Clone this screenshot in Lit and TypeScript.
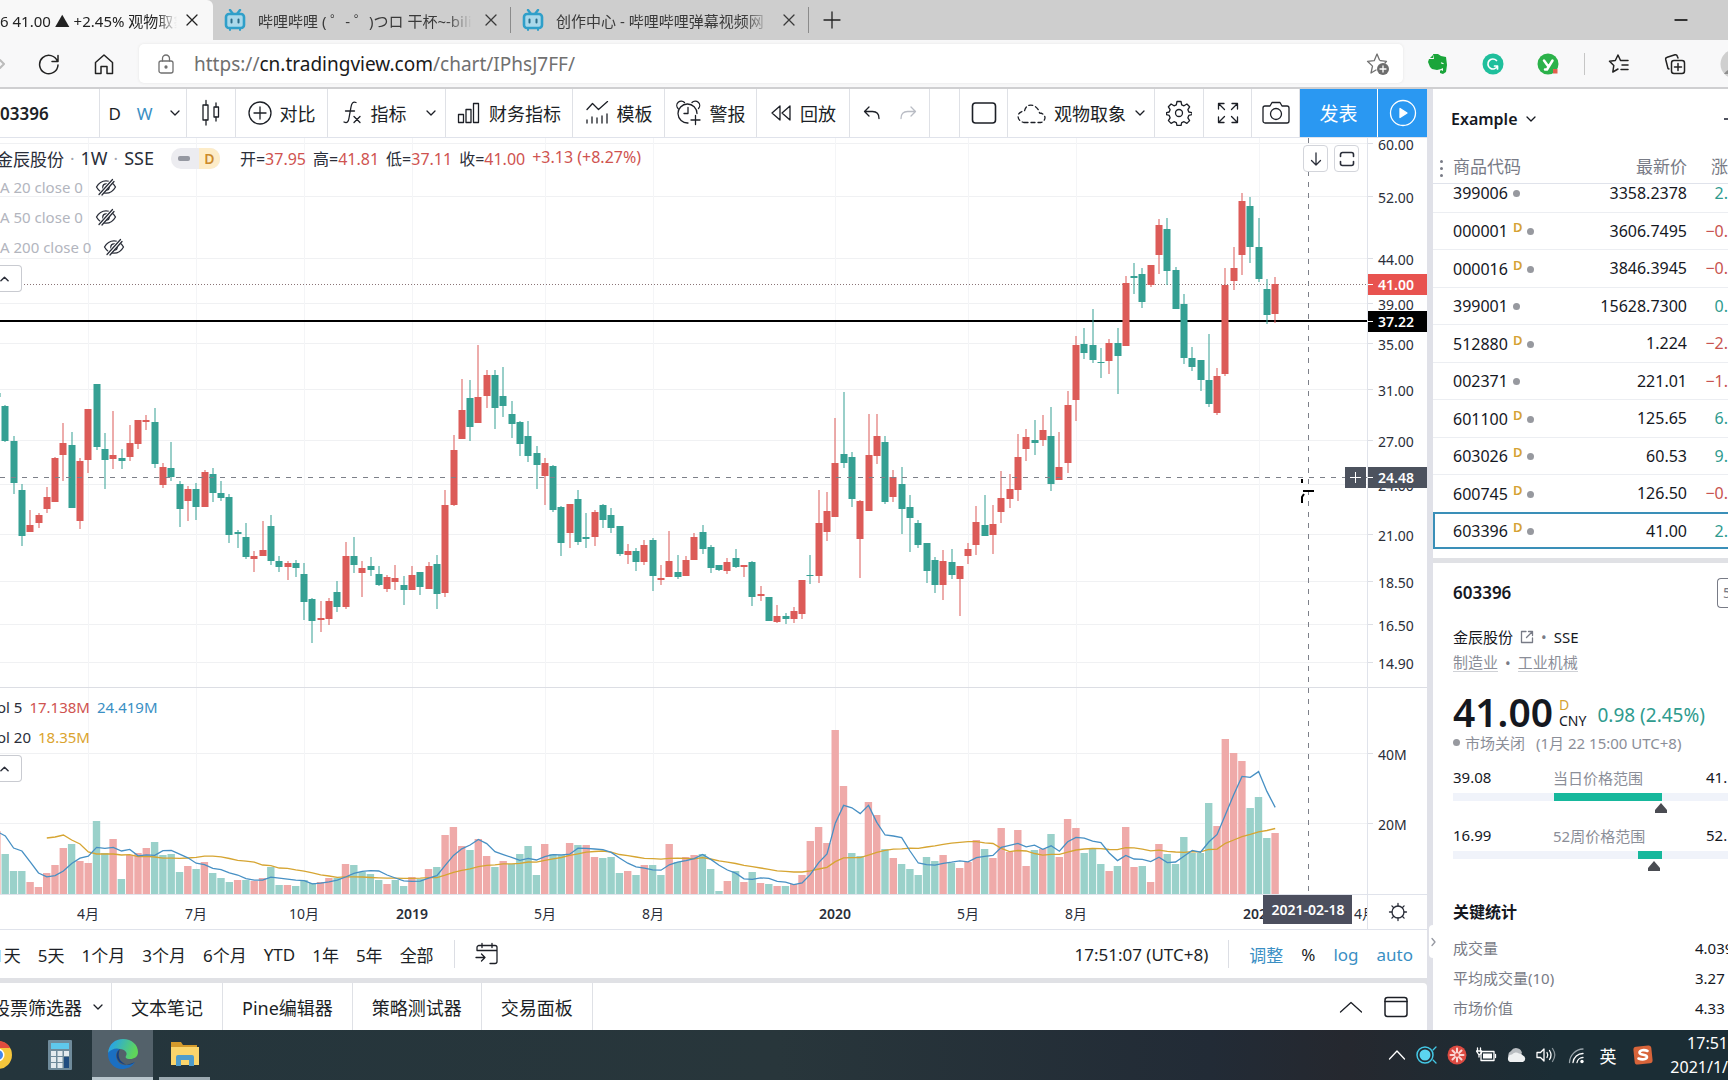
import { LitElement, html, svg, css, nothing } from "lit";
import { customElement, state } from "lit/decorators.js";
import { classMap } from "lit/directives/class-map.js";
import { styleMap } from "lit/directives/style-map.js";

const UP = "#dc5b58";
const DOWN = "#35a093";

/* One weekly candle: direction, high, body top, body bottom, low, volume. */
const CANDLES = `
g 213 213 217 217 63
g 225 226 261 262 40|g 256 261 303 314 23|g 304 310 356 366 23|r 330 345 352 352 12|r 333 335 343 348 7
r 307 317 329 333 21|r 277 278 322 322 29|r 243 263 275 301 46|g 252 265 328 328 50|r 278 281 341 349 33
r 229 229 280 293 31|g 204 204 267 270 73|g 253 269 280 309 41|r 231 275 279 289 55|g 269 278 281 289 15
r 245 263 277 281 39|r 240 240 264 269 41|r 235 240 242 250 46|g 228 242 284 288 52|r 283 287 305 308 39
g 262 288 297 301 40|g 301 304 329 347 22|r 306 309 321 341 28|g 303 309 327 340 25|r 290 292 327 327 32
g 288 294 313 322 21|g 301 313 318 321 16|g 314 317 355 363 12|g 350 352 354 368 14|g 343 357 377 379 14
r 371 376 379 392 13|r 341 370 376 376 16|g 335 346 381 385 27|g 376 381 387 392 9|r 381 383 387 400 9
g 380 383 388 397 8|g 383 394 422 440 14|g 418 419 441 463 11|r 421 438 440 452 12|r 418 421 439 445 16
g 401 412 427 432 16|r 362 376 427 429 30|g 357 376 385 393 29|r 381 388 393 417 22|g 377 386 390 396 20
g 386 394 405 406 14|r 395 397 409 412 10|r 385 398 402 410 14|g 396 405 410 425 8|r 386 395 410 410 17
g 392 392 407 415 15|r 382 386 409 409 25|g 375 384 414 429 27|r 310 325 413 417 59|r 255 270 325 326 67
r 199 230 259 259 48|g 200 218 247 261 44|r 165 217 243 243 55|r 190 195 216 228 38|g 190 195 228 249 27
g 187 216 226 237 33|g 221 234 244 258 30|g 241 242 264 276 40|g 241 256 276 282 48|g 266 273 285 309 19
r 278 283 296 325 50|g 285 286 330 332 40|g 326 327 363 376 39|r 324 324 353 368 51|g 310 319 362 365 49
g 333 357 359 368 49|r 330 332 357 366 37|g 324 325 340 348 36|g 328 335 348 353 37|g 346 346 374 376 21
r 364 371 375 384 23|g 368 371 382 391 19|r 360 365 382 385 29|g 358 360 396 411 29|r 385 398 400 405 19
r 351 381 397 397 50|g 375 392 397 399 32|r 376 380 396 396 37|r 353 357 380 380 39|g 345 352 369 374 40
g 365 367 388 393 25|g 385 385 390 391 3|r 378 382 391 394 13|g 369 378 387 388 23|r 385 385 387 397 12
g 381 382 417 426 22|r 406 414 416 421 11|g 417 417 441 441 10|r 425 436 442 443 8|g 433 436 439 444 8
r 427 431 439 443 10|r 400 400 434 439 19|g 375 395 396 404 53|r 310 343 396 403 67|r 312 331 352 361 51
r 238 283 337 337 164|g 212 274 283 288 108|g 272 277 319 327 41|r 320 321 359 398 38|r 234 275 331 331 92
r 234 256 276 284 79|g 256 262 322 324 45|r 290 297 317 322 36|g 287 304 329 354 30|g 315 327 338 372 25
g 340 343 365 368 19|g 363 363 391 403 37|g 377 380 405 413 33|r 370 381 405 420 39|g 369 382 395 399 31
r 386 386 399 436 26|r 363 369 376 384 32|r 326 342 365 375 54|g 315 345 356 356 45|r 325 344 355 374 36
r 291 318 332 343 66|r 294 309 319 328 42|r 254 277 310 321 64|r 249 257 269 281 28|g 240 260 263 275 44
r 235 250 260 266 45|g 227 256 304 311 60|r 252 287 300 300 37|r 211 225 283 293 75|r 156 165 220 241 66
g 148 164 173 179 41|g 129 165 180 183 45|g 168 182 183 198 30|r 159 163 181 194 23|g 148 163 176 214 28
r 96 103 166 166 67|g 83 96 98 114 27|g 88 94 122 128 28|r 85 85 105 107 12|r 39 45 75 94 50
g 38 49 91 105 40|g 87 90 129 129 30|g 114 124 178 184 57|g 167 178 187 191 41|g 180 180 200 211 41
g 154 200 224 227 91|r 188 196 233 235 68|r 88 105 194 196 155|r 67 88 101 110 141|r 13 21 75 95 133
g 17 26 67 83 86|g 38 67 99 102 97|g 99 109 135 144 56|r 97 104 134 143 61`
  .trim()
  .split(/[|\n]/)
  .map((row) => {
    const [dir, ...n] = row.trim().split(" ");
    const [high, top, bottom, low, vol] = n.map(Number);
    return { up: dir === "r", high, top, bottom, low, vol };
  });

/* Series starts one week before the first fully visible candle. */
const xAt = (i: number) => 5.3 + 8.3 * (i - 1);
const PRICE_TOP = 42;
const VOL_BASE = 756;
const closeOf = (c: { up: boolean; top: number; bottom: number }) => (c.up ? c.top : c.bottom);

const HISTORY = [83, 38, 66];
const VOLUMES = [...HISTORY, ...CANDLES.map((c) => c.vol)];
const average = (i: number, n: number) => {
  const end = i + HISTORY.length + 1;
  const part = VOLUMES.slice(Math.max(0, end - n), end);
  return part.reduce((a, b) => a + b, 0) / part.length;
};
const LONG_START = [56, 57, 59, 54, 50, 42, 40, 40, 40, 39];
const linePoints = (values: [number, number][]) =>
  values.map(([i, v]) => `${xAt(i).toFixed(1)},${(VOL_BASE - v).toFixed(1)}`).join(" ");
const MA5 = linePoints(CANDLES.map((_, i) => [i, average(i, 5)] as [number, number]));
const MA20 = linePoints(
  CANDLES.map((_, i) => [i, i < 16 ? LONG_START[i - 6] : average(i, 20)] as [number, number]).slice(6)
);

const PRICES: [string, number][] = [
  ["60.00", 5], ["52.00", 58], ["44.00", 120], ["39.00", 165], ["35.00", 205], ["31.00", 251],
  ["27.00", 302], ["24.00", 346], ["21.00", 396], ["18.50", 443], ["16.50", 486], ["14.90", 524],
  ["40M", 615], ["20M", 685],
];
const TIMES: [string, number, boolean][] = [
  ["4月", 88, false], ["7月", 196, false], ["10月", 304, false], ["2019", 412, true], ["5月", 545, false],
  ["8月", 653, false], ["2020", 835, true], ["5月", 968, false], ["8月", 1076, false], ["2021", 1259, true],
];

const QUOTES: [string, boolean, string, string][] = [
  ["399006", false, "3358.2378", "2."],
  ["000001", true, "3606.7495", "−0."],
  ["000016", true, "3846.3945", "−0."],
  ["399001", false, "15628.7300", "0."],
  ["512880", true, "1.224", "−2."],
  ["002371", false, "221.01", "−1."],
  ["601100", true, "125.65", "6."],
  ["603026", true, "60.53", "9."],
  ["600745", true, "126.50", "−0."],
  ["603396", true, "41.00", "2."],
];

const icon = (w: number, h: number, body: unknown, cls = "") => html`<svg
  class="icon ${cls}" width=${w} height=${h} viewBox="0 0 ${w} ${h}" aria-hidden="true"
  fill="none" stroke="currentColor" stroke-width="1.3" stroke-linecap="round" stroke-linejoin="round">${body}</svg>`;

const chevron = (cls = "") => icon(12, 12, svg`<path d="M2 4l4 4 4-4"/>`, cls);
const caretUp = () => icon(10, 10, svg`<path d="M1 7l4-4 4 4" stroke-width="1.6"/>`);
const cross = () => icon(12, 12, svg`<path d="M1 1l10 10M11 1L1 11"/>`);

const biliIcon = () => icon(22, 22, svg`
  <path d="M6 1l3 4M16 1l-3 4" stroke="#2f9fc9" stroke-width="2.4"/>
  <rect x="2" y="5" width="18" height="14" rx="3" fill="#a9d8ea" stroke="#2f9fc9" stroke-width="2.6"/>
  <path d="M7.500 10.500v3M14.500 10.500v3" stroke="#2b6c88" stroke-width="2"/>
  <path d="M6 20v1M16 20v1" stroke="#2f9fc9" stroke-width="2"/>`);

const hiddenEye = () => icon(22, 18, svg`
  <path d="M1.500 9C4 4.500 7.200 2.800 11 2.800S18 4.500 20.500 9c-2.500 4.500-5.700 6.200-9.500 6.200S4 13.500 1.500 9z"/>
  <circle cx="11" cy="9" r="3.200"/>
  <path d="M4 17.500L18.500 1" stroke="#fff" stroke-width="4"/>
  <path d="M4 16.500L17.500 1.500M7 17L19 3.500" />`);

@customElement("browser-chrome")
export class BrowserChrome extends LitElement {
  static styles = css`
    :host { display: block; color: #222; font-family: "Noto Sans", "Noto Sans CJK SC", sans-serif; }
    * { box-sizing: border-box; }
    button { border: 0; background: none; padding: 0; margin: 0; color: inherit; font: inherit; display: flex; align-items: center; justify-content: center; flex: none; }
    .icon { display: block; flex: none; }
    .tabs { display: flex; align-items: center; height: 40px; background: #cecece; overflow: hidden; }
    .tab { display: flex; align-items: center; height: 40px; flex: none; font-size: 15px; color: #3a3a3a; }
    .tab.active { background: #f8f8f8; width: 213px; border-radius: 0 6px 0 0; color: #222; }
    .tab .label { overflow: hidden; white-space: nowrap; -webkit-mask-image: linear-gradient(90deg, #000 88%, transparent); }
    .tab.active .label { width: 177px; margin-right: 9px; }
    .tab.second, .tab.third { height: 26px; width: 298px; padding-left: 11px; border-right: 1px solid #8b8b8b; }
    .tab.second .label, .tab.third .label { width: 214px; margin: 0 13px 0 12px; }
    .add { width: 46px; height: 40px; }
    .grow { flex: 1; }
    .min { width: 46px; height: 34px; margin-right: 24px; }
    .bar { display: flex; align-items: center; height: 49px; background: #f8f8f9; border-bottom: 2px solid #cfcfd1; overflow: hidden; }
    .nav { width: 55px; height: 40px; }
    .nav.fwd { width: 21px; color: #bbb; justify-content: flex-start; }
    .address { flex: 1; min-width: 0; display: flex; align-items: center; height: 39px; margin-left: 8px; padding: 0 13px 0 18px; background: #fff; border-radius: 5px; box-shadow: 0 0 3px #e4e4e4; color: #707070; }
    .url { flex: 1; min-width: 0; font-size: 19px; margin-left: 19px; outline: none; white-space: nowrap; overflow: hidden; }
    .url b { font-weight: 400; color: #1a1a1a; }
    .ext { display: flex; align-items: center; gap: 33px; padding: 0 25px 0 24px; }
    .rule { width: 1px; height: 22px; background: #c6c6c6; }
    .right { display: flex; align-items: center; gap: 34px; padding-left: 23px; width: 143px; overflow: hidden; }
  `;

  render() {
    return html`
      <div class="tabs">
        <div class="tab active">
          <span class="label">6 41.00 ▲ +2.45% 观物取象</span>
          <button aria-label="关闭">${cross()}</button>
        </div>
        <div class="tab second">
          ${biliIcon()}<span class="label">哔哩哔哩 ( ゜- ゜)つロ 干杯~-bilibili</span>
          <button aria-label="关闭">${cross()}</button>
        </div>
        <div class="tab third">
          ${biliIcon()}<span class="label">创作中心 - 哔哩哔哩弹幕视频网</span>
          <button aria-label="关闭">${cross()}</button>
        </div>
        <button class="add" aria-label="新建标签页">${icon(18, 18, svg`<path d="M9 1v16M1 9h16"/>`)}</button>
        <div class="grow"></div>
        <button class="min" aria-label="最小化">${icon(14, 4, svg`<path d="M1 2h12" stroke="#000"/>`)}</button>
      </div>
      <div class="bar">
        <button class="nav fwd" aria-label="前进">${icon(6, 14, svg`<path d="M0 3l4 4-4 4" stroke-width="2"/>`)}</button>
        <button class="nav" aria-label="刷新">${icon(22, 22, svg`<path d="M19.500 8.500A9.200 9.200 0 1 0 20 12M20 2.500v6h-6" stroke-width="1.500"/>`)}</button>
        <button class="nav" aria-label="主页">${icon(22, 22, svg`<path d="M2.500 9.500L11 2l8.500 7.500V20.500h-5.500v-7H8v7H2.500z" stroke-width="1.500"/>`)}</button>
        <div class="address">
          ${icon(18, 20, svg`<rect x="2" y="7" width="14" height="12" rx="2"/><path d="M5.500 7V4.500a3.500 3.500 0 0 1 7 0V7"/><circle cx="9" cy="13" r="1" fill="currentColor"/>`)}
          <div class="url" role="textbox" contenteditable="true" aria-label="地址" spellcheck="false">https://<b>cn.tradingview.com</b>/chart/IPhsJ7FF/</div>
          <button aria-label="收藏">${icon(24, 24, svg`<path d="M13.500 8L11 2 8.200 8.700 1.500 9.300l5 4.800L5 21l5-3M14.500 8.700l6 .6-1.500 1.700"/><circle cx="17" cy="17" r="6" fill="#6d6d6d" stroke="none"/><path d="M17 14v6M14 17h6" stroke="#fff"/>`)}</button>
        </div>
        <div class="ext">
          <button aria-label="Evernote">${icon(22, 22, svg`<path d="M6 1h5l3 2 5 1 1 8-1 7-3 2-3-1v-2l1-1 2 1V15l-2 1-4 1-5-1-2-2-2-5 1-3h5z" fill="#1aa53a" stroke="none"/><path d="M3 5l3-3v3z" fill="#1aa53a" stroke="none"/><path d="M14.500 10l1.500.5" stroke="#fff"/>`)}</button>
          <button aria-label="Grammarly">${icon(22, 22, svg`<circle cx="11" cy="11" r="10.500" fill="#1fbf9c" stroke="none"/><path d="M14.500 7.500A5 5 0 1 0 15.500 13H12.500M15.500 13v3" stroke="#fff" stroke-width="1.700"/>`)}</button>
          <button aria-label="有道">${icon(22, 22, svg`<circle cx="11" cy="11" r="10.500" fill="#2bb24a" stroke="none"/><path d="M7 7.500l4 5.500M15.500 7.500L10 16.500H8" stroke="#fff" stroke-width="2.500"/><rect x="16" y="16" width="4.500" height="4.500" fill="#e2604f" stroke="none"/>`)}</button>
        </div>
        <div class="rule"></div>
        <div class="right">
          <button aria-label="收藏夹">${icon(22, 22, svg`<path d="M12.500 7.500L10 2 7.300 7.500 1.500 8.300l4.300 4.200-1 6.500 5.200-3M12.500 7.500H20M14 12h6M13 16.500h7" stroke-width="1.500"/>`)}</button>
          <button aria-label="集锦">${icon(22, 22, svg`<rect x="7.500" y="7.500" width="13" height="13" rx="2.500" stroke-width="1.500"/><path d="M14 10.500v7M10.500 14h7M5 16l-1-.5-2.300-9a2 2 0 0 1 1.500-2.300L11 1.700a2 2 0 0 1 2.300 1.500L14 5" stroke-width="1.500"/>`)}</button>
          <button aria-label="用户">${icon(30, 30, svg`<circle cx="15" cy="15" r="14.500" fill="#cfcfcf" stroke="none"/><circle cx="15" cy="11" r="6" fill="#8d8d8d" stroke="none"/><path d="M4 25a12 9 0 0 1 22 0" fill="#8d8d8d" stroke="none"/>`)}</button>
        </div>
      </div>`;
  }
}

@customElement("chart-toolbar")
export class ChartToolbar extends LitElement {
  static styles = css`
    :host { display: flex; height: 48px; border-bottom: 1px solid #e0e3eb; background: #fff; color: #1c1f26; font-family: "Noto Sans", "Noto Sans CJK SC", sans-serif; font-size: 18px; overflow: hidden; }
    * { box-sizing: border-box; }
    button { border: 0; margin: 0; padding: 0; background: none; color: inherit; font: inherit; display: flex; align-items: center; justify-content: center; white-space: nowrap; }
    .icon { display: block; flex: none; }
    .cell { display: flex; align-items: center; justify-content: center; height: 48px; flex: none; gap: 8px; border-right: 1px solid #dfe1e6; }
    .symbol { width: 100px; font-size: 17px; font-weight: 600; justify-content: flex-start; }
    .period { width: 87px; gap: 16px; padding-left: 3px; font-size: 17px; }
    .period .on { color: #3a8fc4; }
    .w48 { width: 48px; }
    .w49 { width: 49px; }
    .w92 { width: 92px; }
    .w93 { width: 93px; }
    .w118 { width: 118px; padding-left: 4px; }
    .w127 { width: 127px; }
    .w80 { width: 80px; gap: 18px; }
    .w147 { width: 147px; }
    .space { flex: 1; min-width: 0; border-right: 1px solid #dfe1e6; }
    .dim { color: #b9bcc4; }
    .narrow { width: 2px; }
    .publish { width: 78px; background: #2a98f2; color: #fff; border-right: 1px solid #fff; font-size: 19px; }
    .play { width: 49px; background: #2a98f2; color: #fff; border: 0; }
  `;

  render() {
    return html`
      <button class="cell symbol">03396</button>
      <div class="cell period">
        <button>D</button><button class="on">W</button><button aria-label="周期">${chevron()}</button>
      </div>
      <button class="cell w49" aria-label="K线图">${icon(20, 28, svg`<path d="M5 1.500V6M5 21v5M15 4v4M15 18v4"/><rect x="2" y="6" width="5" height="15"/><rect x="13" y="8" width="4.500" height="10"/>`)}</button>
      <button class="cell w92">${icon(24, 24, svg`<circle cx="12" cy="12" r="11"/><path d="M12 6v12M6 12h12"/>`)}对比</button>
      <button class="cell w118">${icon(22, 26, svg`<path d="M3 22c3 1.500 4.500 0 5-4L10 7c.600-4 2-5.500 5-4.500M4.500 11h9M13 16.500l6 6M19 16.500l-6 6"/>`)}指标<span class="narrow"></span>${chevron()}</button>
      <button class="cell w127">${icon(24, 22, svg`<path d="M1.500 20.500v-8h5v8zM9 20.500V7.500h5v13zM16.500 20.500v-19h5v19z"/>`)}财务指标</button>
      <button class="cell w92">${icon(24, 24, svg`<path d="M2 8.500l5.500-6 6 6 9-8M2 22v-3M7 22v-6M12 22v-5M17 22v-7M22 22v-9"/>`)}模板</button>
      <button class="cell w92">${icon(26, 26, svg`<path d="M21 13.500a9.500 9.500 0 1 0-9 9.500M12 7.500v6H8M2 8.500A4.300 4.300 0 0 1 8.500 2.500M16 2.500a4.300 4.300 0 0 1 6.500 6M19.500 15.500v9M15 20h9"/>`)}警报</button>
      <button class="cell w93">${icon(22, 20, svg`<path d="M10 3v14L2 10zM20 3v14l-8-7z"/>`)}回放</button>
      <div class="cell w80">
        <button aria-label="撤销">${icon(18, 18, svg`<path d="M6 3L1.500 7.500 6 12M1.500 7.500h8c4 0 6.500 2.500 6.500 7"/>`)}</button>
        <button class="dim" aria-label="重做">${icon(18, 18, svg`<path d="M12 3l4.500 4.500L12 12M16.500 7.500h-8c-4 0-6.500 2.500-6.500 7"/>`)}</button>
      </div>
      <div class="space"></div>
      <button class="cell w48" aria-label="布局">${icon(26, 24, svg`<rect x="1.500" y="2" width="23" height="20" rx="3" stroke-width="1.600"/>`)}</button>
      <button class="cell w147">${icon(30, 24, svg`<path d="M8 21.500h17c6-2 5-9-1.500-9.500C22 3.500 10.500.5 8.500 10 0 10.500 0 20 8 21.500z" stroke-dasharray="4 3"/>`)}观物取象${chevron()}</button>
      <button class="cell w49" aria-label="设置">${icon(26, 26, svg`<circle cx="13" cy="13" r="3.500"/><path d="M11 1.500h4l.7 3.300 2.300 1 2.900-1.800 2.700 2.800-1.700 2.900.9 2.300 3.200.7v2l-3.200.7-.9 2.400 1.700 2.800-2.700 2.800-2.900-1.700-2.300.9-.7 2.900h-4l-.7-2.900-2.300-.9-2.900 1.700-2.700-2.800 1.700-2.800-.9-2.400-2.700-.7v-2l2.700-.7.9-2.300-1.700-2.900 2.700-2.800L8 5.800l2.300-1z"/>`)}</button>
      <button class="cell w48" aria-label="全屏">${icon(24, 24, svg`<path d="M2.500 8V2.500H8M2.500 2.500l6 6M16 2.500h5.500V8M21.500 2.500l-6 6M2.500 16v5.500H8M2.500 21.500l6-6M16 21.500h5.500V16M21.500 21.500l-6-6"/>`)}</button>
      <button class="cell w48" aria-label="截图">${icon(28, 24, svg`<path d="M3 5h5l2-3.500h8L20 5h5a2 2 0 0 1 2 2v13a2 2 0 0 1-2 2H3a2 2 0 0 1-2-2V7a2 2 0 0 1 2-2z"/><circle cx="14" cy="13" r="5.500"/>`)}</button>
      <button class="cell publish">发表</button>
      <button class="cell play" aria-label="播放">${icon(28, 28, svg`<circle cx="14" cy="14" r="12.500"/><path d="M11 9.500v9l7-4.500z" fill="currentColor"/>`)}</button>`;
  }
}

@customElement("price-chart")
export class PriceChart extends LitElement {
  static styles = css`
    :host { display: grid; grid-template-columns: minmax(0, 1fr) 60px; grid-template-rows: auto 35px; position: relative; overflow: hidden; background: #fff; color: #2a2e39; font-family: "Noto Sans", "Noto Sans CJK SC", sans-serif; }
    * { box-sizing: border-box; }
    button { margin: 0; padding: 0; font: inherit; color: inherit; display: flex; align-items: center; justify-content: center; }
    .plot, .prices, .times { display: block; width: 100%; overflow: hidden; }
    .plot, .prices { height: 756px; }
    .prices { border-left: 1px solid #e0e3eb; }
    .times { height: 35px; border-top: 1px solid #e0e3eb; }
    .corner { border: 0; border-left: 1px solid #e0e3eb; border-top: 1px solid #e0e3eb; background: #fff; }
    text { font-size: 14px; fill: #2a2e39; }
    .bold { font-weight: 600; }
    .light { fill: #fff; font-weight: 600; }
    .mid { text-anchor: middle; }
    .legend { position: absolute; left: 0; top: 6px; display: flex; flex-direction: column; align-items: flex-start; }
    .legend.volume { top: 554px; }
    .row { display: flex; align-items: center; height: 30px; font-size: 15px; white-space: nowrap; }
    .title { font-size: 17px; height: 28px; margin-left: -4px; }
    .title i { font-style: normal; color: #a3a6af; margin: 0 6px; }
    .title .latin { font-size: 18px; }
    .pill { display: flex; align-items: center; height: 21px; margin: 0 20px 0 17px; border-radius: 10px; overflow: hidden; background: #ececf0; }
    .pill .dash { width: 12px; height: 5px; border-radius: 2px; background: #9598a1; margin: 0 9px 0 7px; }
    .pill .d { width: 21px; text-align: center; background: #fdecc8; color: #cc8a2c; font-size: 14px; font-weight: 600; line-height: 21px; }
    .values { display: flex; gap: 7px; font-size: 16px; }
    .values b { font-weight: 400; color: #cf5350; }
    .study { color: #b2b5be; gap: 12px; }
    .study .icon { color: #2a2e39; }
    .vol { gap: 7px; margin-left: -3px; }
    .red { color: #cf5350; }
    .blue { color: #3a8fc4; }
    .gold { color: #dba42e; }
    .fold { width: 22px; height: 27px; margin-top: 3px; padding-right: 12px; background: #fff; border: 1px solid #c9cbd1; border-left: 0; border-radius: 0 4px 4px 0; }
    .tools { position: absolute; top: 7px; right: 68px; display: flex; gap: 6px; }
    .tools button { width: 25px; height: 27px; background: #fff; border: 1px solid #d3d5db; border-radius: 4px; }
  `;

  private plot() {
    return html`<svg class="plot" role="img" aria-label="金辰股份 1W">
      ${PRICES.map(([, y]) => svg`<line x1="0" x2="100%" y1=${y + 0.5} y2=${y + 0.5} stroke="#f0f1f3"/>`)}
      ${TIMES.map(([, x]) => svg`<line x1=${x + 0.5} x2=${x + 0.5} y1="0" y2="756" stroke="#f4f5f7"/>`)}
      <line x1="0" x2="100%" y1="549.5" y2="549.5" stroke="#dcdee4"/>
      <line x1="0" x2="100%" y1="146.5" y2="146.5" stroke="#8a7477" stroke-dasharray="1 2"/>
      <line x1="0" x2="100%" y1="183" y2="183" stroke="#000" stroke-width="2"/>
      <g>
        ${CANDLES.map((c, i) => {
          const x = Math.round(xAt(i));
          const color = c.up ? UP : DOWN;
          return svg`<rect x=${x - 0.5} y=${c.high + PRICE_TOP} width="1" height=${c.low - c.high} fill=${color}/>
            <rect x=${x - 3.5} y=${c.top + PRICE_TOP} width="7" height=${Math.max(1, c.bottom - c.top)} fill=${color}/>`;
        })}
      </g>
      <g>
        ${CANDLES.map((c, i) => {
          const prev = i ? closeOf(CANDLES[i - 1]) : 999;
          const fill = closeOf(c) <= prev ? "#efaaa9" : "#9ad1ca";
          return svg`<rect x=${(xAt(i) - 3.8).toFixed(1)} y=${VOL_BASE - c.vol} width="7.4" height=${c.vol} fill=${fill}/>`;
        })}
        <polyline points=${MA20} fill="none" stroke="#d6a532" stroke-width="1.3"/>
        <polyline points=${MA5} fill="none" stroke="#4790c4" stroke-width="1.3"/>
      </g>
      <line x1="0" x2="100%" y1="339.5" y2="339.5" stroke="#7d8089" stroke-dasharray="5 6"/>
      <line x1="1308.5" x2="1308.5" y1="0" y2="756" stroke="#7d8089" stroke-dasharray="5 6"/>
      <path d="M1302 341v4M1302 365v-6l2-3M1303 353h11" fill="none" stroke="#000" stroke-width="2"/>
      <svg x="100%" y="329" width="22" height="21" overflow="visible">
        <rect x="-22" width="21" height="21" fill="#4c525e"/><path d="M-17 10.500h11M-11.500 5v11" stroke="#fff"/>
      </svg>
    </svg>`;
  }

  private tag(y: number, text: string, fill: string) {
    return svg`<rect x="-1" y=${y} width="61" height="21" fill=${fill}/>
      <path d="M0 ${y + 10.5}h5" stroke="#fff"/><text class="light" x="10" y=${y + 16}>${text}</text>`;
  }

  render() {
    return html`
      ${this.plot()}
      <svg class="prices">
        ${PRICES.map(([label, y]) => svg`<path d="M0 ${y + 0.5}h5" stroke="#dcdee4"/><text x="10" y=${y + 7}>${label}</text>`)}
        <line x1="0" x2="100%" y1="549.5" y2="549.5" stroke="#dcdee4"/>
        ${this.tag(136, "41.00", "#e8534f")} ${this.tag(173, "37.22", "#000")} ${this.tag(329, "24.48", "#4c525e")}
      </svg>
      <svg class="times">
        ${TIMES.map(([label, x, bold]) => svg`<text class=${bold ? "mid bold" : "mid"} x=${x} y="24">${label}</text>`)}
        <text x="1354" y="24">4月</text>
        <rect x="1263" y="0" width="89" height="29" fill="#4c4f5e"/>
        <text class="light mid" x="1308" y="20">2021-02-18</text>
      </svg>
      <button class="corner" aria-label="坐标设置">${icon(20, 20, svg`<circle cx="10" cy="10" r="6"/><path d="M10 4V1.500M10 16v2.500M4 10H1.500M16 10h2.500M5.700 5.700L3.900 3.900M14.300 5.700l1.800-1.800M5.700 14.300l-1.800 1.800M14.300 14.300l1.800 1.800"/>`)}</button>
      <div class="legend">
        <div class="row title">金辰股份<i>·</i><span class="latin">1W</span><i>·</i><span class="latin">SSE</span>
          <span class="pill"><span class="dash"></span><span class="d">D</span></span>
          <span class="values"><span>开=<b>37.95</b></span><span>高=<b>41.81</b></span><span>低=<b>37.11</b></span><span>收=<b>41.00</b></span><b>+3.13 (+8.27%)</b></span>
        </div>
        <div class="row study">A 20 close 0 ${hiddenEye()}</div>
        <div class="row study">A 50 close 0 ${hiddenEye()}</div>
        <div class="row study">A 200 close 0 ${hiddenEye()}</div>
        <button class="fold" aria-label="收起">${caretUp()}</button>
      </div>
      <div class="legend volume">
        <div class="row vol"><span>ol 5</span><span class="red">17.138M</span><span class="blue">24.419M</span></div>
        <div class="row vol"><span>ol 20</span><span class="gold">18.35M</span></div>
        <button class="fold" aria-label="收起">${caretUp()}</button>
      </div>
      <div class="tools">
        <button aria-label="下移">${icon(14, 16, svg`<path d="M7 2v12M2.500 9.500L7 14l4.500-4.500"/>`)}</button>
        <button aria-label="最大化">${icon(18, 18, svg`<path d="M2.500 6.500v-2a2 2 0 0 1 2-2h2M11.500 2.500h2a2 2 0 0 1 2 2v2M15.500 11.500v2a2 2 0 0 1-2 2h-2M6.500 15.500h-2a2 2 0 0 1-2-2v-2M6.500 2.500h5M6.500 15.500h5" stroke-width="1.600"/>`)}</button>
      </div>`;
  }
}

@customElement("chart-footer")
export class ChartFooter extends LitElement {
  @state() private ranges = ["1天", "5天", "1个月", "3个月", "6个月", "YTD", "1年", "5年", "全部"];

  static styles = css`
    :host { display: block; background: #e0e1e5; color: #1c1f26; font-family: "Noto Sans", "Noto Sans CJK SC", sans-serif; font-size: 17px; }
    * { box-sizing: border-box; }
    button { border: 0; margin: 0; padding: 0; background: none; color: inherit; font: inherit; display: flex; align-items: center; justify-content: center; white-space: nowrap; flex: none; }
    .icon { display: block; flex: none; }
    .ranges { display: flex; align-items: center; height: 49px; margin-bottom: 5px; border-top: 1px solid #e0e3eb; background: #fff; overflow: hidden; padding-right: 14px; }
    .list { display: flex; gap: 17px; margin-left: -6px; }
    .rule { width: 1px; height: 28px; background: #dcdee4; margin: 0 20px; flex: none; }
    .grow { flex: 1; }
    .scale { display: flex; gap: 18px; }
    .on { color: #3a8fc4; }
    .tabs { display: flex; height: 47px; background: #fff; border-radius: 0 4px 0 0; overflow: hidden; padding-right: 18px; }
    .tab { padding: 0 19px; border-right: 1px solid #dfe1e6; font-size: 18px; height: 47px; }
    .tab.first { padding: 0 7px 0 0; width: 112px; justify-content: flex-end; gap: 10px; }
    .tail { display: flex; align-items: center; gap: 20px; }
  `;

  render() {
    return html`
      <div class="ranges">
        <div class="list">${this.ranges.map((r) => html`<button>${r}</button>`)}</div>
        <div class="rule"></div>
        <button aria-label="前往">${icon(24, 24, svg`<path d="M2 8V5.500A2 2 0 0 1 4 3.500h16a2 2 0 0 1 2 2v14a2 2 0 0 1-2 2h-5M2 8.500h20M7 1.500v4M17 1.500v4M1 15.500h9M6.500 12l3.500 3.500L6.500 19"/>`)}</button>
        <div class="grow"></div>
        <button>17:51:07 (UTC+8)</button>
        <div class="rule"></div>
        <div class="scale"><button class="on">调整</button><button>%</button><button class="on">log</button><button class="on">auto</button></div>
      </div>
      <div class="tabs">
        <button class="tab first">股票筛选器${chevron()}</button>
        <button class="tab">文本笔记</button>
        <button class="tab">Pine编辑器</button>
        <button class="tab">策略测试器</button>
        <button class="tab">交易面板</button>
        <div class="grow"></div>
        <div class="tail">
          <button aria-label="展开">${icon(24, 14, svg`<path d="M1.500 12L12 2.500 22.500 12"/>`)}</button>
          <button aria-label="窗口">${icon(26, 22, svg`<rect x="2" y="1.500" width="22" height="19" rx="2.500" stroke-width="1.500"/><path d="M2 5.500h22" stroke-width="1.500"/>`)}</button>
        </div>
      </div>`;
  }
}

@customElement("watch-panel")
export class WatchPanel extends LitElement {
  @state() private selected = "603396";

  static styles = css`
    :host { display: flex; flex-direction: column; min-width: 0; overflow: hidden; background: #fff; color: #15181f; font-family: "Noto Sans", "Noto Sans CJK SC", sans-serif; font-size: 16px; white-space: nowrap; }
    * { box-sizing: border-box; }
    button { border: 0; margin: 0; padding: 0; background: none; color: inherit; font: inherit; display: flex; align-items: center; flex: none; }
    .icon { display: block; flex: none; }
    .head { display: flex; align-items: center; justify-content: space-between; height: 59px; padding-left: 18px; }
    .name { font-weight: 600; gap: 7px; }
    .cut { width: 4px; height: 2px; background: #50535e; }
    table { border-collapse: collapse; table-layout: fixed; width: 320px; flex: none; }
    th, td { padding: 0; font-weight: 400; border-bottom: 1px solid #eceef2; }
    .cols th { height: 35px; color: #787b86; font-size: 17px; text-align: right; border-bottom-color: #e0e3eb; }
    .cols .sym { text-align: left; }
    .sym { width: 130px; padding-left: 7px; text-align: left; }
    .dots { display: inline-flex; flex-direction: column; gap: 4px; margin-right: 10px; vertical-align: middle; }
    .dots i { width: 3px; height: 3px; border-radius: 50%; background: #787b86; }
    .last { width: 124px; text-align: right; }
    .scroll { display: flex; flex-direction: column; justify-content: flex-end; height: 366px; overflow: hidden; }
    .scroll .sym { padding-left: 20px; }
    .scroll tr { height: 38px; }
    .scroll tr:nth-child(even) { height: 37px; }
    .sel td { border-bottom-color: transparent; }
    .sel { outline: 2px solid #3a8fb8; outline-offset: -2px; }
    .flag { color: #d5a233; font-size: 13px; font-weight: 600; line-height: 16px; vertical-align: 5px; margin-left: 5px; }
    .dot { display: inline-block; width: 7px; height: 7px; border-radius: 50%; background: #97999f; margin-left: 5px; vertical-align: 2px; flex: none; }
    .chg { text-align: right; padding-right: 25px; color: #2f9b8e; }
    .chg.neg { color: #c85450; }
    .strip { height: 5px; margin-top: 8px; background: #e0e1e5; }
    .detail { padding-left: 20px; }
    .top { display: flex; align-items: center; justify-content: space-between; height: 30px; margin-top: 15px; font-weight: 600; font-size: 17px; }
    .five { width: 11px; height: 30px; padding-left: 5px; overflow: hidden; border: 1px solid #787b86; border-right: 0; border-radius: 4px 0 0 4px; color: #787b86; font-size: 14px; font-weight: 400; }
    .line { display: flex; align-items: center; height: 26px; gap: 7px; font-size: 15px; }
    .line.co { margin-top: 16px; }
    .line i, .line.co .icon { color: #787b86; font-style: normal; }
    .grey, .grey a { color: #8b8e98; }
    a { color: inherit; text-decoration: none; }
    .under { border-bottom: 1px solid #cfd1d6; line-height: 18px; }
    .quote { display: flex; align-items: flex-end; height: 43px; margin-top: 14px; }
    .big { font-size: 39px; line-height: 43px; font-weight: 600; }
    .unit { display: flex; flex-direction: column; margin: 0 11px 4px 6px; font-size: 14px; line-height: 16px; }
    .unit span { color: #d5a233; }
    .move { font-size: 19px; line-height: 35px; color: #2f9b8e; }
    .market { display: flex; align-items: center; height: 20px; gap: 5px; font-size: 15px; color: #8b8e98; }
    .market .dot { margin: 0; }
    .market .when { margin-left: 6px; }
    .range { display: grid; grid-template-columns: 100px 153px 1fr; align-items: center; font-size: 15px; margin-top: 14px; }
    .range.week { margin-top: 12px; }
    .track { grid-column: 1 / -1; display: flex; height: 8px; background: #f0f3fa; margin-top: 5px; }
    .fill { background: #16b89c; }
    .marker { grid-column: 1 / -1; height: 10px; margin-top: 2px; color: #4a4c52; }
    .marker svg { display: block; }
    h2 { margin: 29px 0 9px; font-size: 16px; line-height: 24px; font-weight: 700; }
    dl { margin: 0; display: grid; grid-template-columns: 242px 1fr; font-size: 15px; line-height: 30px; }
    dt { color: #787b86; }
    dd { margin: 0; }
  `;

  private range(low: string, label: string, high: string, start: number, width: number, mark: number, cls = "") {
    return html`<div class="range ${cls}">
      <span>${low}</span><span class="grey">${label}</span><span>${high}</span>
      <div class="track"><div style=${styleMap({ width: `${start}px` })}></div><div class="fill" style=${styleMap({ width: `${width}px` })}></div></div>
      <div class="marker" style=${styleMap({ paddingLeft: `${mark}px` })}><svg width="12" height="10"><path d="M6 0l6 7v3H0V7z" fill="currentColor"/></svg></div>
    </div>`;
  }

  render() {
    return html`
      <div class="head"><button class="name">Example ${chevron()}</button><span class="cut"></span></div>
      <table class="cols"><thead><tr>
        <th class="sym"><span class="dots"><i></i><i></i><i></i></span>商品代码</th><th class="last">最新价</th><th class="chg">涨</th>
      </tr></thead></table>
      <div class="scroll"><table><tbody>
        ${QUOTES.map(([code, flag, last, chg]) => html`<tr class=${classMap({ sel: code === this.selected })} @click=${() => (this.selected = code)}>
          <td class="sym">${code}${flag ? html`<span class="flag">D</span>` : nothing}<span class="dot"></span></td>
          <td class="last">${last}</td>
          <td class=${classMap({ chg: true, neg: chg.startsWith("−") })}>${chg}</td>
        </tr>`)}
      </tbody></table></div>
      <div class="strip"></div>
      <div class="detail">
        <div class="top"><span>603396</span><button class="five">5</button></div>
        <div class="line co">金辰股份 ${icon(14, 14, svg`<path d="M6 1.500H1.500v11h11V8M8.500 1.500h4v4M12.500 1.500L6.500 7.500"/>`)}<i>•</i><span>SSE</span></div>
        <div class="line grey"><a class="under" href="#">制造业</a><i>•</i><a class="under" href="#">工业机械</a></div>
        <div class="quote"><span class="big">41.00</span><span class="unit"><span>D</span>CNY</span><span class="move">0.98 (2.45%)</span></div>
        <div class="market"><span class="dot"></span>市场关闭<span class="when">(1月 22 15:00 UTC+8)</span></div>
        ${this.range("39.08", "当日价格范围", "41.", 101, 108, 202)}
        ${this.range("16.99", "52周价格范围", "52.", 185, 24, 195, "week")}
        <h2>关键统计</h2>
        <dl><dt>成交量</dt><dd>4.039</dd><dt>平均成交量(10)</dt><dd>3.27</dd><dt>市场价值</dt><dd>4.33</dd></dl>
      </div>`;
  }
}

@customElement("task-bar")
export class TaskBar extends LitElement {
  static styles = css`
    :host { display: flex; align-items: center; height: 50px; overflow: hidden; color: #fff; background: linear-gradient(90deg, #24353c, #28363b 45%, #222b36 70%, #25282f 78%, #1b2d35 90%); font-family: "Noto Sans", "Noto Sans CJK SC", sans-serif; font-size: 16px; }
    * { box-sizing: border-box; }
    button { border: 0; margin: 0; padding: 0; background: none; color: inherit; font: inherit; display: flex; align-items: center; justify-content: center; height: 50px; flex: none; }
    .icon { display: block; flex: none; }
    .chrome { width: 28px; justify-content: flex-start; margin-left: -16px; }
    .calc { width: 80px; padding-left: 15px; }
    .edge { width: 61px; background: #53616a; border-bottom: 3px solid #b9c6cd; }
    .files { width: 51px; margin-left: 6px; border-bottom: 3px solid #9ba9b0; }
    .grow { flex: 1; }
    .tray { display: flex; align-items: center; gap: 9px; }
    .tray button { width: 21px; }
    .tray .wide { width: 24px; font-size: 17px; }
    .sogou { margin-left: 3px; }
    .clock { display: flex; flex-direction: column; align-items: flex-end; width: 66px; line-height: 24px; white-space: nowrap; }
  `;

  render() {
    return html`
      <button class="chrome" aria-label="Chrome">${icon(28, 28, svg`<g stroke="none"><circle cx="14" cy="14" r="14" fill="#f6c63c"/><path d="M14 0a14 14 0 0 1 12.200 7H14L8 12 2.500 6A14 14 0 0 1 14 0z" fill="#e04c3e"/><path d="M2 7l7 10 5 4-2 7A14 14 0 0 1 2 7z" fill="#3ba55a"/><circle cx="14" cy="14" r="6.500" fill="#fff"/><circle cx="14" cy="14" r="5" fill="#4386ec"/></g>`)}</button>
      <button class="calc" aria-label="计算器">${icon(24, 30, svg`<g stroke="none"><rect width="24" height="30" rx="1" fill="#6f8b9b"/><rect x="3" y="3" width="18" height="6" fill="#5fc8ec"/><path d="M3 11h5v5H3zM9.500 11h5v5h-5zM16 11h5v5h-5zM3 17h5v5H3zM9.500 17h5v5h-5zM3 23h5v5H3zM9.500 23h5v5h-5z" fill="#e3ebef"/><path d="M16 17h5v11h-5z" fill="#1f4d80"/></g>`)}</button>
      <button class="edge" aria-label="Edge">${icon(30, 30, svg`<defs><linearGradient id="e" x1="0" y1="0" x2="1" y2="0.300"><stop offset="0.200" stop-color="#2aa7e0"/><stop offset="1" stop-color="#5fd65a"/></linearGradient></defs><g stroke="none"><path d="M0 14C1 5 7 0 15 0c9 0 15 6 15 13 0 5-4 7-8 7-4 0-5-1.500-4-3 2-3-1-7-6-7-5 0-9 2-12 4z" fill="url(#e)"/><path d="M0 14c3-4 8-5.500 12-4-4 2-5 7-3 11 3 6 10 7 18 2-3 5-8 7-13 7C6 30-.5 23 0 14z" fill="#1b6fc2"/><path d="M12 10c-4 3-4 8-2 11 3 5 10 6 17 2-3 3-9 4-13 0-4-3-4-9-2-13z" fill="#123f86"/></g>`)}</button>
      <button class="files" aria-label="文件资源管理器">${icon(28, 26, svg`<g stroke="none"><path d="M0 3V1h10l2 3h14v5H0z" fill="#d49a2c"/><path d="M0 6h28v18H0z" fill="#fbd56b"/><path d="M5 25V16q0-2 2-2h14q2 0 2 2v9h-5v-6h-8v6z" fill="#4f9ccb"/></g>`)}</button>
      <div class="grow"></div>
      <div class="tray">
        <button aria-label="显示隐藏的图标">${icon(18, 12, svg`<path d="M1.500 10L9 2l7.500 8"/>`)}</button>
        <button aria-label="录屏">${icon(21, 20, svg`<circle cx="9" cy="10" r="8" stroke="#43c8e6" stroke-width="1.500"/><circle cx="9" cy="10" r="5.500" fill="#5bd5ef" stroke="none"/><path d="M17 5l3-3M17 15l3 3" stroke="#43c8e6"/>`)}</button>
        <button aria-label="安全">${icon(20, 20, svg`<circle cx="10" cy="10" r="9.500" fill="#dc4a41" stroke="none"/><path d="M10 3.500v4M10 12.500v4M3.500 10h4M12.500 10h4M5.500 5.500l2.500 2.500M12 12l2.500 2.500M14.500 5.500L12 8M8 12l-2.500 2.500" stroke="#fbd7d3" stroke-width="2"/>`)}</button>
        <button aria-label="电池">${icon(21, 16, svg`<rect x="5" y="4.500" width="13" height="9"/><rect x="7" y="6.500" width="9" height="5" fill="#fff" stroke="none"/><path d="M19.500 7.500v3M1.500 1v3M4.500 1v3M0.500 4h5v2l-2.500 2zM3 8v2"/>`)}</button>
        <button aria-label="OneDrive">${icon(21, 16, svg`<g stroke="none"><path d="M5 13a5 5 0 0 1 0-9 6 6 0 0 1 11 2l-6 7z" fill="#b9bdc1"/><path d="M4 15a4 4 0 0 1 2-7.500 5 5 0 0 1 7-1 5 5 0 0 1 4 2 3.500 3.500 0 0 1 0 6.500z" fill="#eef0f1"/></g>`)}</button>
        <button aria-label="音量">${icon(21, 18, svg`<path d="M1 6.500h3.500L8 3v12l-3.500-3.500H1zM11 6.500q1.500 2.500 0 5M13.500 4.500q3 4.500 0 9"/><path d="M16.500 2.500q4.500 6.500 0 13" stroke="#8a959b"/>`)}</button>
        <button aria-label="网络">${icon(18, 18, svg`<path d="M5 16.500A10 10 0 0 1 15 7.500M9 16.500a6 6 0 0 1 6-5"/><path d="M1.500 16.500A14 14 0 0 1 15 3" stroke="#9aa5ab"/><circle cx="14" cy="15.500" r="1.700" fill="#fff" stroke="none"/>`)}</button>
        <button class="wide" aria-label="输入法">英</button>
        <button class="sogou" aria-label="搜狗">${icon(20, 20, svg`<rect x="1" y="1" width="18" height="18" rx="3" fill="#d8643a" stroke="none" transform="rotate(-6 10 10)"/><path d="M14.500 6c-3-1.500-8-1-8 1.500 0 3 7.500 1.500 7.500 4.500 0 2.500-5 3-8.500 1.500" stroke="#fff" stroke-width="2.600"/>`)}</button>
        <div class="clock"><span>17:51</span><span>2021/1/</span></div>
      </div>`;
  }
}

@customElement("app-root")
export class AppRoot extends LitElement {
  static styles = css`
    :host { display: flex; flex-direction: column; min-height: 100vh; overflow: hidden; background: #fff; }
    .work { flex: 1; display: grid; grid-template-columns: minmax(0, 1fr) 6px 295px; }
    .left { display: flex; flex-direction: column; min-width: 0; }
    .gutter { position: relative; background: #e0e1e8; }
    .handle { position: absolute; left: 2px; bottom: 72px; width: 9px; height: 33px; padding: 0; border: 0; border-radius: 4px; background: #fff; color: #9598a1; display: flex; align-items: center; justify-content: center; z-index: 1; }
  `;

  render() {
    return html`
      <browser-chrome></browser-chrome>
      <div class="work">
        <main class="left">
          <chart-toolbar></chart-toolbar>
          <price-chart></price-chart>
          <chart-footer></chart-footer>
        </main>
        <div class="gutter"><button class="handle" aria-label="收起面板">${icon(5, 10, svg`<path d="M1 1.500L4 5 1 8.500"/>`)}</button></div>
        <watch-panel></watch-panel>
      </div>
      <task-bar></task-bar>`;
  }
}
